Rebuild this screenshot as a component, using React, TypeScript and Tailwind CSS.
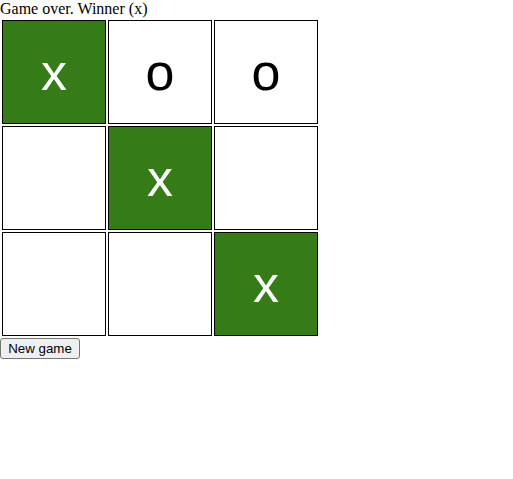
import React from 'react';

const board = ['x', 'o', 'o', '', 'x', '', '', '', 'x'];
const winning = [0, 4, 8];

export default function App() {
  return (
    <div className="bg-white min-h-[479px] text-black">
      <div className="text-[16px] leading-[18px] font-['Liberation_Serif',serif]">Game over. Winner (x)</div>
      <div className="flex flex-wrap w-[320px] p-px">
        {board.map((cell, i) => (
          <div
            key={i}
            className={
              'm-px h-[104px] w-[104px] border border-black flex items-center justify-center text-[52px] font-["Liberation_Sans",sans-serif] ' +
              (winning.includes(i) ? 'bg-[#357b17] text-white' : 'bg-white text-black')
            }
          >
            {cell}
          </div>
        ))}
      </div>
      <button className="h-[21px] w-[80px] flex items-center justify-center bg-[#efefef] border border-[#767676] rounded-[3px] text-[13.333px] font-['Liberation_Sans',sans-serif] leading-none text-black">
        New game
      </button>
    </div>
  );
}
